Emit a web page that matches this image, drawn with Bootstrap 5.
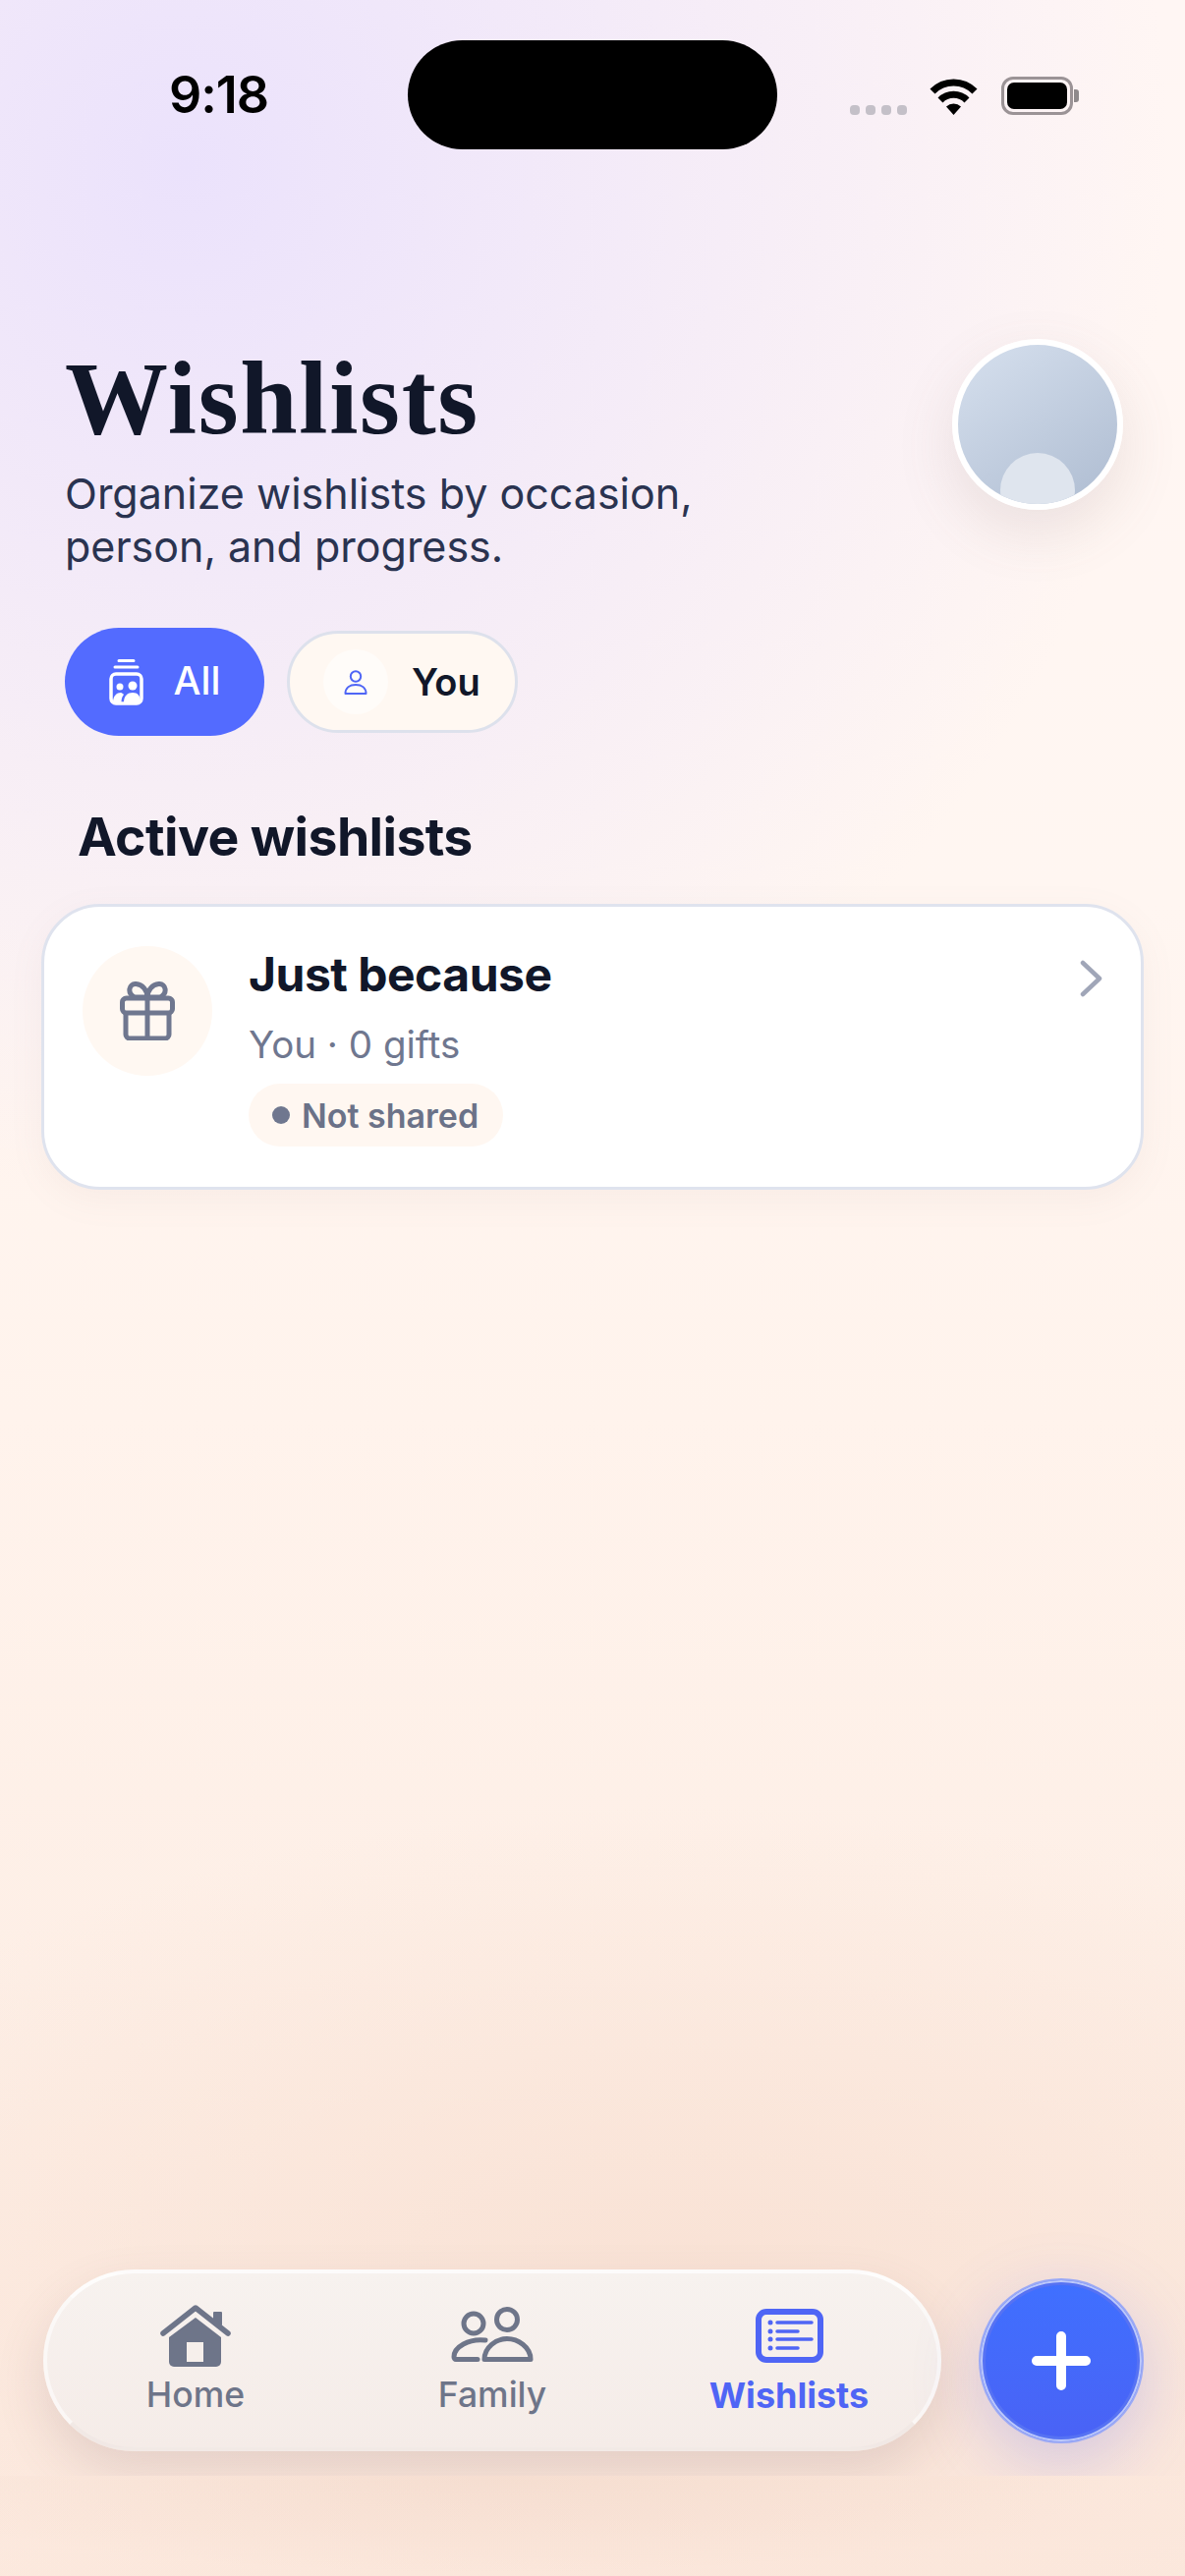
<!DOCTYPE html>
<html lang="en">
<head>
  <meta charset="UTF-8" />
  <title>Wishlists</title>
  <meta name="viewport" content="width=device-width, initial-scale=1" />
  <link href="https://cdn.jsdelivr.net/npm/bootstrap@5.3.0/dist/css/bootstrap.min.css" rel="stylesheet" />
  <style>
    html, body { height: 2622px; }
    body {
      font-family: Inter, "Noto Sans", sans-serif;
      color: #111729;
      overflow: hidden;
      background:
        radial-gradient(ellipse 1000px 1050px at 190px 170px, #ebe2fc 0, rgba(235, 226, 252, 0) 100%),
        radial-gradient(ellipse 1000px 480px at 700px 2320px, #f9e2d5 0, rgba(249, 226, 213, 0) 100%),
        linear-gradient(180deg, #fff6f4 0, #fff6f1 35%, #fff3ec 55%, #fdeee5 80%, #fce9de 100%);
    }
    .status-row { height: 111px; margin-top: 41px; }
    .status-left { width: 415px; padding-left: 30px; font-size: 52px; font-weight: 600; color: #000; letter-spacing: -1px; line-height: 1; }
    .island { width: 376px; height: 111px; border-radius: 56px; background: #000; }
    .status-right { padding: 0 0 35px 74px; gap: 22px; }
    .signal-row { gap: 6px; }
    .signal-dot { width: 10px; height: 10px; border-radius: 4px; background: #c4c0c8; }
    .battery { width: 73px; height: 39px; border: 3px solid #9b9396; border-radius: 12px; padding: 3px; margin-left: 1px; }
    .battery-fill { height: 100%; background: #000; border-radius: 7px; }
    .battery-cap { width: 5px; height: 13px; background: #8f8a8c; border-radius: 0 3px 3px 0; margin: 0 0 13px -21px; }

    .head-area { padding: 193px 63px 0 66px; }
    .page-title { font-family: "Liberation Serif", serif; font-weight: 700; font-size: 105px; line-height: 100px; margin: 11px 0 19px; letter-spacing: 1.7px; }
    .page-sub { font-size: 43px; line-height: 54px; color: #2a3350; margin: 0; }
    .avatar-ring {
      width: 174px; height: 174px; border: 6px solid #fff; border-radius: 50%; overflow: hidden;
      background: linear-gradient(145deg, #d6e0ee, #aebcd1);
      box-shadow: 0 22px 60px rgba(120, 100, 100, .14);
    }
    .avatar-bump { width: 76px; height: 76px; border-radius: 50%; background: #dfe5ee; margin: 110px auto 0; }

    .pill-row { padding: 0 0 0 66px; margin-top: 56px; gap: 23px; }
    .pill-all { width: 203px; height: 110px; border-radius: 55px; border: 0; background: #536bff; color: #fff; font-size: 39.5px; font-weight: 500; gap: 31px; }
    .pill-you { width: 235px; height: 104px; border-radius: 52px; border: 3px solid #dde1ec; background: #fff8f2; color: #111729; font-size: 38px; font-weight: 600; padding: 0 0 0 34px; gap: 24px; }
    .pill-all:hover { background: #536bff; }
    .pill-you:hover { background: #fff8f2; }
    .pill-dot { width: 66px; height: 66px; border-radius: 50%; background: #fffcf9; }

    .section-title { font-size: 53.5px; font-weight: 700; letter-spacing: -.6px; line-height: 64px; margin: 71px 0 0 79px; }

    .wish-card { margin: 36px 42px 0; height: 291px; border: 3px solid #dfe3ee; border-radius: 60px; background: #fff; box-shadow: 0 10px 36px rgba(150, 130, 130, .07); padding: 40px 37px 0 39px; }
    .gift-circle { width: 132px; height: 132px; border-radius: 50%; background: #fff8f2; }
    .wish-body { margin-left: 37px; }
    .wish-title { font-size: 48px; font-weight: 700; letter-spacing: -.5px; line-height: 58px; margin: 0; }
    .wish-meta { font-size: 38.5px; color: #6f778f; line-height: 46px; margin: 19px 0 0; }
    .share-chip { height: 64px; width: 259px; margin-top: 17px; border-radius: 32px; background: #fff7f1; color: #6b7288; font-size: 34px; font-weight: 600; padding-left: 24px; gap: 12px; }
    .share-dot { width: 18px; height: 18px; border-radius: 50%; background: #6f778f; }
    .wish-arrow { margin: 14px 0 0 auto; }

    .dock-clip { margin-top: auto; height: 300px; overflow: hidden; padding: 90px 42px 0 44px; gap: 40px; }
    .tab-bar {
      width: 914px; height: 185px; border-radius: 93px;
      background: linear-gradient(180deg, #f7f2ef, #f5ece8);
      border: 4px solid;
      border-color: rgba(255, 255, 255, .8) rgba(255, 255, 255, .55) rgba(240, 232, 228, .8);
      box-shadow: 0 22px 50px rgba(110, 90, 100, .16);
    }
    .tab-item { flex: 1 1 0; font-size: 35.5px; font-weight: 500; color: #6e7589; line-height: 44px; gap: 6px; }
    .tab-item.is-on { color: #4f65f5; font-size: 36px; font-weight: 700; }
    .tab-glyph { height: 64px; }
    .plus-btn {
      width: 164px; height: 164px; margin-top: 11px; border-radius: 50%; border: 0;
      background: linear-gradient(180deg, #3f70ff, #4a62f5);
      box-shadow: 0 0 0 2px #9aa9f6, inset 0 0 0 2px #bcc8fb, inset 0 0 0 5px #5672f3, 0 20px 70px rgba(90, 100, 245, .26);
    }
    .plus-btn:hover { background: linear-gradient(180deg, #3f70ff, #4a62f5); }
    .dock-foot {
      height: 102px;
      background: radial-gradient(ellipse 640px 100px at 500px 0, rgba(200, 150, 125, .1), rgba(200, 150, 125, 0) 100%);
    }
  </style>
</head>
<body class="d-flex flex-column">

  <div class="status-row d-flex">
    <div class="status-left d-flex align-items-center justify-content-center">9:18</div>
    <div class="island"></div>
    <div class="status-right d-flex align-items-end">
      <div class="signal-row d-flex">
        <span class="signal-dot"></span><span class="signal-dot"></span><span class="signal-dot"></span><span class="signal-dot"></span>
      </div>
      <svg width="51" height="38" viewBox="0 0 51 38">
        <path d="M4 14 A30 30 0 0 1 47 14" fill="none" stroke="#000" stroke-width="7" />
        <path d="M12 23 A19 19 0 0 1 39 23" fill="none" stroke="#000" stroke-width="7" />
        <path d="M25.5 38 L18 29.500 A11 11 0 0 1 33 29.500 Z" fill="#000" />
      </svg>
      <div class="battery"><div class="battery-fill"></div></div>
      <div class="battery-cap"></div>
    </div>
  </div>

  <div class="head-area d-flex justify-content-between align-items-start">
    <div>
      <h1 class="page-title">Wishlists</h1>
      <p class="page-sub">Organize wishlists by occasion,<br>person, and progress.</p>
    </div>
    <div class="avatar-ring"><div class="avatar-bump"></div></div>
  </div>

  <div class="pill-row d-flex align-items-center">
    <button class="btn pill-all d-flex align-items-center justify-content-center" type="button">
      <svg width="35" height="47" viewBox="0 0 35 47">
        <path d="M10 1.500H25M6 8H29" stroke="#fff" stroke-width="3" stroke-linecap="round" fill="none" />
        <rect x="2" y="15" width="31" height="30" rx="5" fill="none" stroke="#fff" stroke-width="3.500" />
        <circle cx="11" cy="28" r="3.500" fill="#fff" />
        <circle cx="24" cy="27" r="4.500" fill="#fff" />
        <path d="M4 44C4 37 8 34 12 34C13 34 14 35 15 36C13 38 12.500 41 12.500 44Z" fill="#fff" />
        <path d="M15 44C15 37 19 34 24 34C29 34 32 37 32 44Z" fill="#fff" />
      </svg>
      <span>All</span>
    </button>
    <button class="btn pill-you d-flex align-items-center" type="button">
      <span class="pill-dot d-flex align-items-center justify-content-center">
        <svg width="24" height="25" viewBox="0 0 24 25">
          <circle cx="12" cy="6.500" r="5.200" fill="none" stroke="#4f65f5" stroke-width="2" />
          <path d="M1.500 24C1.500 18 6 15 12 15S22.500 18 22.500 24Z" fill="none" stroke="#4f65f5" stroke-width="2" stroke-linejoin="round" />
        </svg>
      </span>
      <span>You</span>
    </button>
  </div>

  <h2 class="section-title">Active wishlists</h2>

  <div class="card wish-card d-flex flex-row align-items-start">
    <div class="gift-circle d-flex align-items-center justify-content-center flex-shrink-0">
      <svg width="56" height="60" viewBox="0 0 56 60">
        <path d="M28 16H15C7 12 9 2 16.500 2.500C23 3 28 9 28 16C28 9 33 3 39.500 2.500C47 2 49 12 41 16H28" fill="none" stroke="#6f778f" stroke-width="5" stroke-linejoin="round" />
        <rect x="2.500" y="17" width="51" height="15" rx="4" fill="none" stroke="#6f778f" stroke-width="5" />
        <path d="M6 32V54A4 4 0 0 0 10 58H46A4 4 0 0 0 50 54V32M28 17V58" fill="none" stroke="#6f778f" stroke-width="5" />
      </svg>
    </div>
    <div class="wish-body">
      <h3 class="wish-title">Just because</h3>
      <p class="wish-meta">You · 0 gifts</p>
      <div class="share-chip d-flex align-items-center"><span class="share-dot"></span><span>Not shared</span></div>
    </div>
    <svg class="wish-arrow" width="26" height="38" viewBox="0 0 26 38">
      <path d="M4 3L21 19L4 35" fill="none" stroke="#a0a6b8" stroke-width="4.500" stroke-linecap="round" stroke-linejoin="round" />
    </svg>
  </div>

  <div class="dock-clip d-flex align-items-start">
    <div class="tab-bar d-flex align-items-center">
      <div class="tab-item d-flex flex-column align-items-center">
        <svg class="tab-glyph" width="72" height="64" viewBox="0 0 72 64">
          <path d="M3 29L36 3L69 29" fill="none" stroke="#6e7589" stroke-width="5.500" stroke-linecap="round" stroke-linejoin="round" />
          <rect x="54" y="7" width="9" height="14" rx="1" fill="#6e7589" />
          <path d="M36 13L62 33V58A5 5 0 0 1 57 63H14A5 5 0 0 1 9 58V33Z" fill="#6e7589" />
          <rect x="27" y="38" width="17" height="20" fill="#f6efeb" />
        </svg>
        <span>Home</span>
      </div>
      <div class="tab-item d-flex flex-column align-items-center">
        <svg class="tab-glyph" width="84" height="64" viewBox="0 0 84 64">
          <circle cx="23" cy="19" r="10" fill="none" stroke="#6e7589" stroke-width="5" />
          <circle cx="57" cy="15" r="10.500" fill="none" stroke="#6e7589" stroke-width="5" />
          <path d="M35 36C18 34 3 43 3 53C3 54.500 4 55.500 5 55.500H27" fill="none" stroke="#6e7589" stroke-width="5" stroke-linecap="round" />
          <path d="M34 55.500C34 43 46 34.500 57 34.500C68 34.500 81 43 81 55.500Z" fill="none" stroke="#6e7589" stroke-width="5" stroke-linejoin="round" />
        </svg>
        <span>Family</span>
      </div>
      <div class="tab-item is-on d-flex flex-column align-items-center">
        <svg class="tab-glyph" width="69" height="64" viewBox="0 0 69 64">
          <rect x="3" y="7" width="63" height="49" rx="8" fill="none" stroke="#4f65f5" stroke-width="6" />
          <path d="M22 18H57M22 27H43M22 35H57M22 44H43" stroke="#4f65f5" stroke-width="3.500" stroke-linecap="round" />
          <circle cx="15" cy="18" r="2.500" fill="#4f65f5" /><circle cx="15" cy="27" r="2.500" fill="#4f65f5" />
          <circle cx="15" cy="35" r="2.500" fill="#4f65f5" /><circle cx="15" cy="44" r="2.500" fill="#4f65f5" />
        </svg>
        <span>Wishlists</span>
      </div>
    </div>
    <button class="btn plus-btn d-flex align-items-center justify-content-center flex-shrink-0" type="button" aria-label="Add">
      <svg width="60" height="60" viewBox="0 0 60 60">
        <path d="M30 5V55M5 30H55" stroke="#fff" stroke-width="10" stroke-linecap="round" />
      </svg>
    </button>
  </div>
  <div class="dock-foot"></div>

  <script src="https://cdn.jsdelivr.net/npm/bootstrap@5.3.0/dist/js/bootstrap.bundle.min.js"></script>
</body>
</html>
